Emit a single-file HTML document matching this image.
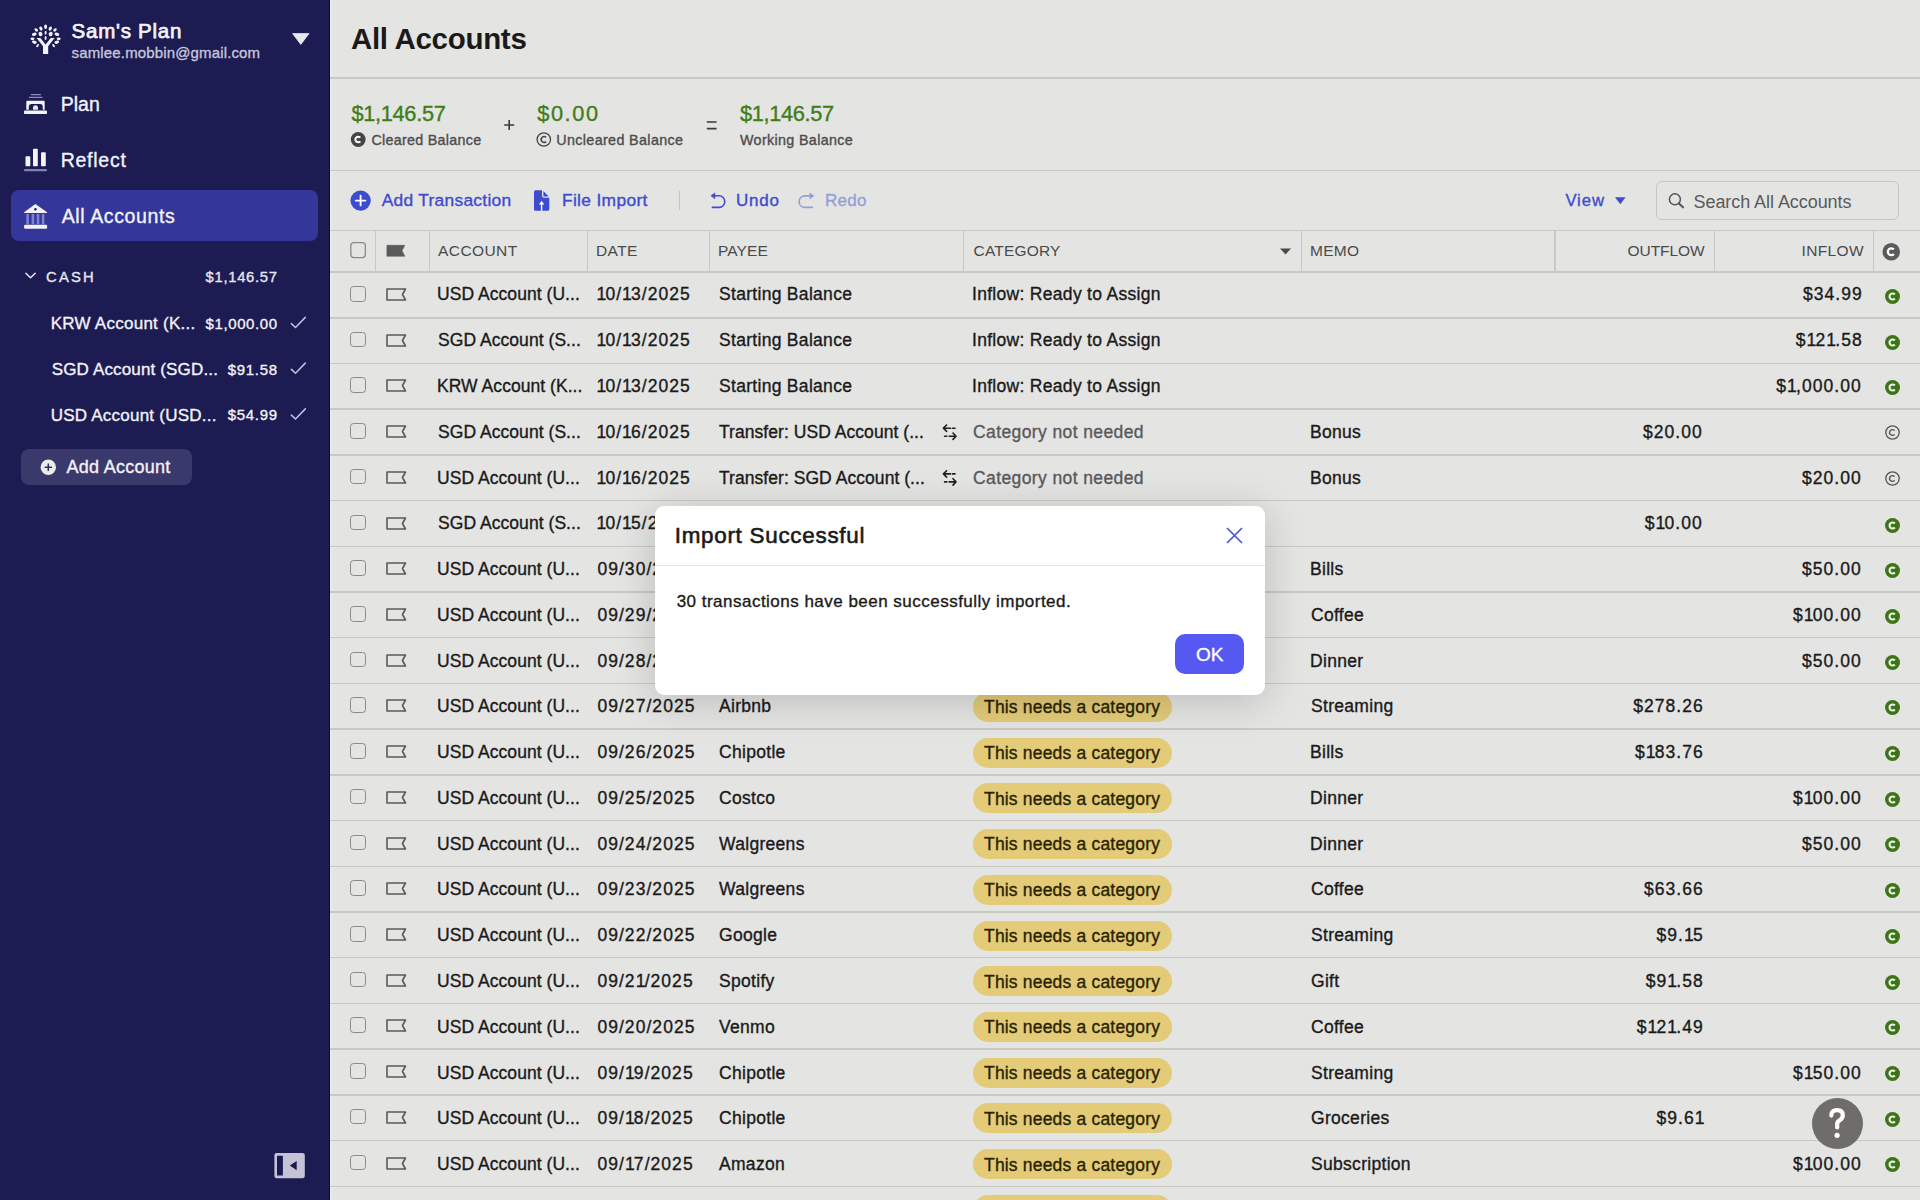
<!DOCTYPE html>
<html><head><meta charset="utf-8"><style>
html,body{margin:0;padding:0;width:1920px;height:1200px;overflow:hidden;background:#e4e4e3;}
body{position:relative;font-family:"Liberation Sans",sans-serif;}
div,svg{position:absolute;}
.t{-webkit-text-stroke:0.35px currentColor;}
</style></head><body>
<div style="position:absolute;left:0px;top:0px;width:330px;height:1200px;background:#1c1b52;border-radius:0px;"></div><div style="position:absolute;left:329px;top:0px;width:1px;height:1200px;background:#0c0b3e;border-radius:0px;"></div><div style="position:absolute;left:10.7px;top:190.2px;width:307.3px;height:51.0px;background:#35369a;border-radius:8px;"></div><div style="position:absolute;left:20.7px;top:448.9px;width:171.3px;height:35.900000000000034px;background:#3a396c;border-radius:8px;"></div><div style="position:absolute;left:330px;top:0px;width:1590px;height:1200px;background:#e4e4e3;border-radius:0px;"></div><div style="position:absolute;left:330px;top:0px;width:1.5px;height:1200px;background:#e9e9ee;border-radius:0px;"></div><div style="position:absolute;left:330px;top:77px;width:1590px;height:1.5px;background:#c9c9c4;border-radius:0px;"></div><div style="position:absolute;left:330px;top:169.5px;width:1590px;height:1.5px;background:#c9c9c4;border-radius:0px;"></div><div style="position:absolute;left:679px;top:190.6px;width:1px;height:19.400000000000006px;background:#c4c4c4;border-radius:0px;"></div><div style="position:absolute;left:1656.4px;top:180.8px;width:242.6px;height:39.5px;box-sizing:border-box;border:1.3px solid #c6c6c1;border-radius:6px;"></div><div style="position:absolute;left:330px;top:229.5px;width:1590px;height:1.5px;background:#c9c9c4;border-radius:0px;"></div><div style="position:absolute;left:330px;top:271px;width:1590px;height:1.5px;background:#c9c9c4;border-radius:0px;"></div><div style="position:absolute;left:374.79999999999995px;top:231px;width:1.2000000000000455px;height:40px;background:#c9c9c4;border-radius:0px;"></div><div style="position:absolute;left:428.5px;top:231px;width:1.2000000000000455px;height:40px;background:#c9c9c4;border-radius:0px;"></div><div style="position:absolute;left:587.1px;top:231px;width:1.2000000000000455px;height:40px;background:#c9c9c4;border-radius:0px;"></div><div style="position:absolute;left:708.6999999999999px;top:231px;width:1.2000000000000455px;height:40px;background:#c9c9c4;border-radius:0px;"></div><div style="position:absolute;left:963.1999999999999px;top:231px;width:1.2000000000000455px;height:40px;background:#c9c9c4;border-radius:0px;"></div><div style="position:absolute;left:1300.9px;top:231px;width:1.199999999999818px;height:40px;background:#c9c9c4;border-radius:0px;"></div><div style="position:absolute;left:1554.4px;top:231px;width:1.199999999999818px;height:40px;background:#c9c9c4;border-radius:0px;"></div><div style="position:absolute;left:1713.9px;top:231px;width:1.199999999999818px;height:40px;background:#c9c9c4;border-radius:0px;"></div><div style="position:absolute;left:1872.9px;top:231px;width:1.199999999999818px;height:40px;background:#c9c9c4;border-radius:0px;"></div><div style="position:absolute;left:330px;top:317.01px;width:1590px;height:1.5px;background:#c9c9c4;border-radius:0px;"></div><div style="position:absolute;left:330px;top:362.71999999999997px;width:1590px;height:1.5px;background:#c9c9c4;border-radius:0px;"></div><div style="position:absolute;left:330px;top:408.43px;width:1590px;height:1.5px;background:#c9c9c4;border-radius:0px;"></div><div style="position:absolute;left:330px;top:454.14px;width:1590px;height:1.5px;background:#c9c9c4;border-radius:0px;"></div><div style="position:absolute;left:330px;top:499.85px;width:1590px;height:1.5px;background:#c9c9c4;border-radius:0px;"></div><div style="position:absolute;left:330px;top:545.56px;width:1590px;height:1.5px;background:#c9c9c4;border-radius:0px;"></div><div style="position:absolute;left:330px;top:591.27px;width:1590px;height:1.5px;background:#c9c9c4;border-radius:0px;"></div><div style="position:absolute;left:972.5px;top:554.91px;width:199.7px;height:30px;border-radius:15px;background:#e3cb78;"></div><div style="position:absolute;left:330px;top:636.98px;width:1590px;height:1.5px;background:#c9c9c4;border-radius:0px;"></div><div style="position:absolute;left:972.5px;top:600.62px;width:199.7px;height:30px;border-radius:15px;background:#e3cb78;"></div><div style="position:absolute;left:330px;top:682.69px;width:1590px;height:1.5px;background:#c9c9c4;border-radius:0px;"></div><div style="position:absolute;left:972.5px;top:646.34px;width:199.7px;height:30px;border-radius:15px;background:#e3cb78;"></div><div style="position:absolute;left:330px;top:728.4px;width:1590px;height:1.5px;background:#c9c9c4;border-radius:0px;"></div><div style="position:absolute;left:972.5px;top:692.04px;width:199.7px;height:30px;border-radius:15px;background:#e3cb78;"></div><div style="position:absolute;left:330px;top:774.11px;width:1590px;height:1.5px;background:#c9c9c4;border-radius:0px;"></div><div style="position:absolute;left:972.5px;top:737.75px;width:199.7px;height:30px;border-radius:15px;background:#e3cb78;"></div><div style="position:absolute;left:330px;top:819.8199999999999px;width:1590px;height:1.5px;background:#c9c9c4;border-radius:0px;"></div><div style="position:absolute;left:972.5px;top:783.46px;width:199.7px;height:30px;border-radius:15px;background:#e3cb78;"></div><div style="position:absolute;left:330px;top:865.53px;width:1590px;height:1.5px;background:#c9c9c4;border-radius:0px;"></div><div style="position:absolute;left:972.5px;top:829.17px;width:199.7px;height:30px;border-radius:15px;background:#e3cb78;"></div><div style="position:absolute;left:330px;top:911.24px;width:1590px;height:1.5px;background:#c9c9c4;border-radius:0px;"></div><div style="position:absolute;left:972.5px;top:874.88px;width:199.7px;height:30px;border-radius:15px;background:#e3cb78;"></div><div style="position:absolute;left:330px;top:956.95px;width:1590px;height:1.5px;background:#c9c9c4;border-radius:0px;"></div><div style="position:absolute;left:972.5px;top:920.60px;width:199.7px;height:30px;border-radius:15px;background:#e3cb78;"></div><div style="position:absolute;left:330px;top:1002.66px;width:1590px;height:1.5px;background:#c9c9c4;border-radius:0px;"></div><div style="position:absolute;left:972.5px;top:966.30px;width:199.7px;height:30px;border-radius:15px;background:#e3cb78;"></div><div style="position:absolute;left:330px;top:1048.37px;width:1590px;height:1.5px;background:#c9c9c4;border-radius:0px;"></div><div style="position:absolute;left:972.5px;top:1012.01px;width:199.7px;height:30px;border-radius:15px;background:#e3cb78;"></div><div style="position:absolute;left:330px;top:1094.0800000000002px;width:1590px;height:1.5px;background:#c9c9c4;border-radius:0px;"></div><div style="position:absolute;left:972.5px;top:1057.73px;width:199.7px;height:30px;border-radius:15px;background:#e3cb78;"></div><div style="position:absolute;left:330px;top:1139.79px;width:1590px;height:1.5px;background:#c9c9c4;border-radius:0px;"></div><div style="position:absolute;left:972.5px;top:1103.43px;width:199.7px;height:30px;border-radius:15px;background:#e3cb78;"></div><div style="position:absolute;left:330px;top:1185.5px;width:1590px;height:1.5px;background:#c9c9c4;border-radius:0px;"></div><div style="position:absolute;left:972.5px;top:1149.14px;width:199.7px;height:30px;border-radius:15px;background:#e3cb78;"></div><div style="position:absolute;left:330px;top:1231.21px;width:1590px;height:1.5px;background:#c9c9c4;border-radius:0px;"></div><div style="position:absolute;left:972.5px;top:1194.86px;width:199.7px;height:30px;border-radius:15px;background:#e3cb78;"></div><div style="position:absolute;left:350.2px;top:286.06px;width:15.6px;height:15.6px;box-sizing:border-box;border:1.3px solid #8a8a8a;border-radius:3.5px;"></div><svg style="position:absolute;left:386px;top:288.06px" width="21" height="13" viewBox="0 0 21 13"><path d="M1 1 H19.5 L16.5 6.5 L19.5 12 H1 Z" fill="none" stroke="#5a5a5a" stroke-width="1.6" stroke-linejoin="round"/></svg><svg style="position:absolute;left:1885.2px;top:288.96px" width="15" height="15" viewBox="0 0 15 15"><circle cx="7.5" cy="7.5" r="7.5" fill="#3d7418"/><path d="M9.8 5.5 A3.0 3.0 0 1 0 9.8 9.5" fill="none" stroke="#eef4e6" stroke-width="2.1"/></svg><div style="position:absolute;left:350.2px;top:331.76px;width:15.6px;height:15.6px;box-sizing:border-box;border:1.3px solid #8a8a8a;border-radius:3.5px;"></div><svg style="position:absolute;left:386px;top:333.76px" width="21" height="13" viewBox="0 0 21 13"><path d="M1 1 H19.5 L16.5 6.5 L19.5 12 H1 Z" fill="none" stroke="#5a5a5a" stroke-width="1.6" stroke-linejoin="round"/></svg><svg style="position:absolute;left:1885.2px;top:334.67px" width="15" height="15" viewBox="0 0 15 15"><circle cx="7.5" cy="7.5" r="7.5" fill="#3d7418"/><path d="M9.8 5.5 A3.0 3.0 0 1 0 9.8 9.5" fill="none" stroke="#eef4e6" stroke-width="2.1"/></svg><div style="position:absolute;left:350.2px;top:377.48px;width:15.6px;height:15.6px;box-sizing:border-box;border:1.3px solid #8a8a8a;border-radius:3.5px;"></div><svg style="position:absolute;left:386px;top:379.48px" width="21" height="13" viewBox="0 0 21 13"><path d="M1 1 H19.5 L16.5 6.5 L19.5 12 H1 Z" fill="none" stroke="#5a5a5a" stroke-width="1.6" stroke-linejoin="round"/></svg><svg style="position:absolute;left:1885.2px;top:380.38px" width="15" height="15" viewBox="0 0 15 15"><circle cx="7.5" cy="7.5" r="7.5" fill="#3d7418"/><path d="M9.8 5.5 A3.0 3.0 0 1 0 9.8 9.5" fill="none" stroke="#eef4e6" stroke-width="2.1"/></svg><div style="position:absolute;left:350.2px;top:423.19px;width:15.6px;height:15.6px;box-sizing:border-box;border:1.3px solid #8a8a8a;border-radius:3.5px;"></div><svg style="position:absolute;left:386px;top:425.19px" width="21" height="13" viewBox="0 0 21 13"><path d="M1 1 H19.5 L16.5 6.5 L19.5 12 H1 Z" fill="none" stroke="#5a5a5a" stroke-width="1.6" stroke-linejoin="round"/></svg><svg style="position:absolute;left:0;top:0" width="1920" height="1200" viewBox="0 0 1920 1200"><path d="M946.6 424.99 L943.4 428.19 L946.6 431.38 M943.6 428.19 H950.6 M952.6 428.19 H955 M953 432.99 L956 436.19 L953 439.38 M955.8 436.19 H949.2 M946.8 436.19 H944.6" fill="none" stroke="#1f1f1f" stroke-width="1.6" stroke-linecap="round" stroke-linejoin="round"/></svg><svg style="position:absolute;left:1885.2px;top:425.49px" width="15" height="15" viewBox="0 0 15 15"><circle cx="7.5" cy="7.5" r="6.7" fill="none" stroke="#555" stroke-width="1.3"/><path d="M9.6 5.6 A2.9 2.9 0 1 0 9.6 9.4" fill="none" stroke="#555" stroke-width="1.4"/></svg><div style="position:absolute;left:350.2px;top:468.90px;width:15.6px;height:15.6px;box-sizing:border-box;border:1.3px solid #8a8a8a;border-radius:3.5px;"></div><svg style="position:absolute;left:386px;top:470.90px" width="21" height="13" viewBox="0 0 21 13"><path d="M1 1 H19.5 L16.5 6.5 L19.5 12 H1 Z" fill="none" stroke="#5a5a5a" stroke-width="1.6" stroke-linejoin="round"/></svg><svg style="position:absolute;left:0;top:0" width="1920" height="1200" viewBox="0 0 1920 1200"><path d="M946.6 470.70 L943.4 473.90 L946.6 477.10 M943.6 473.90 H950.6 M952.6 473.90 H955 M953 478.70 L956 481.90 L953 485.10 M955.8 481.90 H949.2 M946.8 481.90 H944.6" fill="none" stroke="#1f1f1f" stroke-width="1.6" stroke-linecap="round" stroke-linejoin="round"/></svg><svg style="position:absolute;left:1885.2px;top:471.20px" width="15" height="15" viewBox="0 0 15 15"><circle cx="7.5" cy="7.5" r="6.7" fill="none" stroke="#555" stroke-width="1.3"/><path d="M9.6 5.6 A2.9 2.9 0 1 0 9.6 9.4" fill="none" stroke="#555" stroke-width="1.4"/></svg><div style="position:absolute;left:350.2px;top:514.61px;width:15.6px;height:15.6px;box-sizing:border-box;border:1.3px solid #8a8a8a;border-radius:3.5px;"></div><svg style="position:absolute;left:386px;top:516.61px" width="21" height="13" viewBox="0 0 21 13"><path d="M1 1 H19.5 L16.5 6.5 L19.5 12 H1 Z" fill="none" stroke="#5a5a5a" stroke-width="1.6" stroke-linejoin="round"/></svg><svg style="position:absolute;left:1885.2px;top:517.50px" width="15" height="15" viewBox="0 0 15 15"><circle cx="7.5" cy="7.5" r="7.5" fill="#3d7418"/><path d="M9.8 5.5 A3.0 3.0 0 1 0 9.8 9.5" fill="none" stroke="#eef4e6" stroke-width="2.1"/></svg><div style="position:absolute;left:350.2px;top:560.32px;width:15.6px;height:15.6px;box-sizing:border-box;border:1.3px solid #8a8a8a;border-radius:3.5px;"></div><svg style="position:absolute;left:386px;top:562.32px" width="21" height="13" viewBox="0 0 21 13"><path d="M1 1 H19.5 L16.5 6.5 L19.5 12 H1 Z" fill="none" stroke="#5a5a5a" stroke-width="1.6" stroke-linejoin="round"/></svg><svg style="position:absolute;left:1885.2px;top:563.22px" width="15" height="15" viewBox="0 0 15 15"><circle cx="7.5" cy="7.5" r="7.5" fill="#3d7418"/><path d="M9.8 5.5 A3.0 3.0 0 1 0 9.8 9.5" fill="none" stroke="#eef4e6" stroke-width="2.1"/></svg><div style="position:absolute;left:350.2px;top:606.03px;width:15.6px;height:15.6px;box-sizing:border-box;border:1.3px solid #8a8a8a;border-radius:3.5px;"></div><svg style="position:absolute;left:386px;top:608.03px" width="21" height="13" viewBox="0 0 21 13"><path d="M1 1 H19.5 L16.5 6.5 L19.5 12 H1 Z" fill="none" stroke="#5a5a5a" stroke-width="1.6" stroke-linejoin="round"/></svg><svg style="position:absolute;left:1885.2px;top:608.93px" width="15" height="15" viewBox="0 0 15 15"><circle cx="7.5" cy="7.5" r="7.5" fill="#3d7418"/><path d="M9.8 5.5 A3.0 3.0 0 1 0 9.8 9.5" fill="none" stroke="#eef4e6" stroke-width="2.1"/></svg><div style="position:absolute;left:350.2px;top:651.74px;width:15.6px;height:15.6px;box-sizing:border-box;border:1.3px solid #8a8a8a;border-radius:3.5px;"></div><svg style="position:absolute;left:386px;top:653.74px" width="21" height="13" viewBox="0 0 21 13"><path d="M1 1 H19.5 L16.5 6.5 L19.5 12 H1 Z" fill="none" stroke="#5a5a5a" stroke-width="1.6" stroke-linejoin="round"/></svg><svg style="position:absolute;left:1885.2px;top:654.64px" width="15" height="15" viewBox="0 0 15 15"><circle cx="7.5" cy="7.5" r="7.5" fill="#3d7418"/><path d="M9.8 5.5 A3.0 3.0 0 1 0 9.8 9.5" fill="none" stroke="#eef4e6" stroke-width="2.1"/></svg><div style="position:absolute;left:350.2px;top:697.45px;width:15.6px;height:15.6px;box-sizing:border-box;border:1.3px solid #8a8a8a;border-radius:3.5px;"></div><svg style="position:absolute;left:386px;top:699.45px" width="21" height="13" viewBox="0 0 21 13"><path d="M1 1 H19.5 L16.5 6.5 L19.5 12 H1 Z" fill="none" stroke="#5a5a5a" stroke-width="1.6" stroke-linejoin="round"/></svg><svg style="position:absolute;left:1885.2px;top:700.35px" width="15" height="15" viewBox="0 0 15 15"><circle cx="7.5" cy="7.5" r="7.5" fill="#3d7418"/><path d="M9.8 5.5 A3.0 3.0 0 1 0 9.8 9.5" fill="none" stroke="#eef4e6" stroke-width="2.1"/></svg><div style="position:absolute;left:350.2px;top:743.16px;width:15.6px;height:15.6px;box-sizing:border-box;border:1.3px solid #8a8a8a;border-radius:3.5px;"></div><svg style="position:absolute;left:386px;top:745.16px" width="21" height="13" viewBox="0 0 21 13"><path d="M1 1 H19.5 L16.5 6.5 L19.5 12 H1 Z" fill="none" stroke="#5a5a5a" stroke-width="1.6" stroke-linejoin="round"/></svg><svg style="position:absolute;left:1885.2px;top:746.06px" width="15" height="15" viewBox="0 0 15 15"><circle cx="7.5" cy="7.5" r="7.5" fill="#3d7418"/><path d="M9.8 5.5 A3.0 3.0 0 1 0 9.8 9.5" fill="none" stroke="#eef4e6" stroke-width="2.1"/></svg><div style="position:absolute;left:350.2px;top:788.87px;width:15.6px;height:15.6px;box-sizing:border-box;border:1.3px solid #8a8a8a;border-radius:3.5px;"></div><svg style="position:absolute;left:386px;top:790.87px" width="21" height="13" viewBox="0 0 21 13"><path d="M1 1 H19.5 L16.5 6.5 L19.5 12 H1 Z" fill="none" stroke="#5a5a5a" stroke-width="1.6" stroke-linejoin="round"/></svg><svg style="position:absolute;left:1885.2px;top:791.76px" width="15" height="15" viewBox="0 0 15 15"><circle cx="7.5" cy="7.5" r="7.5" fill="#3d7418"/><path d="M9.8 5.5 A3.0 3.0 0 1 0 9.8 9.5" fill="none" stroke="#eef4e6" stroke-width="2.1"/></svg><div style="position:absolute;left:350.2px;top:834.58px;width:15.6px;height:15.6px;box-sizing:border-box;border:1.3px solid #8a8a8a;border-radius:3.5px;"></div><svg style="position:absolute;left:386px;top:836.58px" width="21" height="13" viewBox="0 0 21 13"><path d="M1 1 H19.5 L16.5 6.5 L19.5 12 H1 Z" fill="none" stroke="#5a5a5a" stroke-width="1.6" stroke-linejoin="round"/></svg><svg style="position:absolute;left:1885.2px;top:837.48px" width="15" height="15" viewBox="0 0 15 15"><circle cx="7.5" cy="7.5" r="7.5" fill="#3d7418"/><path d="M9.8 5.5 A3.0 3.0 0 1 0 9.8 9.5" fill="none" stroke="#eef4e6" stroke-width="2.1"/></svg><div style="position:absolute;left:350.2px;top:880.29px;width:15.6px;height:15.6px;box-sizing:border-box;border:1.3px solid #8a8a8a;border-radius:3.5px;"></div><svg style="position:absolute;left:386px;top:882.29px" width="21" height="13" viewBox="0 0 21 13"><path d="M1 1 H19.5 L16.5 6.5 L19.5 12 H1 Z" fill="none" stroke="#5a5a5a" stroke-width="1.6" stroke-linejoin="round"/></svg><svg style="position:absolute;left:1885.2px;top:883.19px" width="15" height="15" viewBox="0 0 15 15"><circle cx="7.5" cy="7.5" r="7.5" fill="#3d7418"/><path d="M9.8 5.5 A3.0 3.0 0 1 0 9.8 9.5" fill="none" stroke="#eef4e6" stroke-width="2.1"/></svg><div style="position:absolute;left:350.2px;top:926.00px;width:15.6px;height:15.6px;box-sizing:border-box;border:1.3px solid #8a8a8a;border-radius:3.5px;"></div><svg style="position:absolute;left:386px;top:928.00px" width="21" height="13" viewBox="0 0 21 13"><path d="M1 1 H19.5 L16.5 6.5 L19.5 12 H1 Z" fill="none" stroke="#5a5a5a" stroke-width="1.6" stroke-linejoin="round"/></svg><svg style="position:absolute;left:1885.2px;top:928.90px" width="15" height="15" viewBox="0 0 15 15"><circle cx="7.5" cy="7.5" r="7.5" fill="#3d7418"/><path d="M9.8 5.5 A3.0 3.0 0 1 0 9.8 9.5" fill="none" stroke="#eef4e6" stroke-width="2.1"/></svg><div style="position:absolute;left:350.2px;top:971.71px;width:15.6px;height:15.6px;box-sizing:border-box;border:1.3px solid #8a8a8a;border-radius:3.5px;"></div><svg style="position:absolute;left:386px;top:973.71px" width="21" height="13" viewBox="0 0 21 13"><path d="M1 1 H19.5 L16.5 6.5 L19.5 12 H1 Z" fill="none" stroke="#5a5a5a" stroke-width="1.6" stroke-linejoin="round"/></svg><svg style="position:absolute;left:1885.2px;top:974.61px" width="15" height="15" viewBox="0 0 15 15"><circle cx="7.5" cy="7.5" r="7.5" fill="#3d7418"/><path d="M9.8 5.5 A3.0 3.0 0 1 0 9.8 9.5" fill="none" stroke="#eef4e6" stroke-width="2.1"/></svg><div style="position:absolute;left:350.2px;top:1017.41px;width:15.6px;height:15.6px;box-sizing:border-box;border:1.3px solid #8a8a8a;border-radius:3.5px;"></div><svg style="position:absolute;left:386px;top:1019.41px" width="21" height="13" viewBox="0 0 21 13"><path d="M1 1 H19.5 L16.5 6.5 L19.5 12 H1 Z" fill="none" stroke="#5a5a5a" stroke-width="1.6" stroke-linejoin="round"/></svg><svg style="position:absolute;left:1885.2px;top:1020.31px" width="15" height="15" viewBox="0 0 15 15"><circle cx="7.5" cy="7.5" r="7.5" fill="#3d7418"/><path d="M9.8 5.5 A3.0 3.0 0 1 0 9.8 9.5" fill="none" stroke="#eef4e6" stroke-width="2.1"/></svg><div style="position:absolute;left:350.2px;top:1063.13px;width:15.6px;height:15.6px;box-sizing:border-box;border:1.3px solid #8a8a8a;border-radius:3.5px;"></div><svg style="position:absolute;left:386px;top:1065.13px" width="21" height="13" viewBox="0 0 21 13"><path d="M1 1 H19.5 L16.5 6.5 L19.5 12 H1 Z" fill="none" stroke="#5a5a5a" stroke-width="1.6" stroke-linejoin="round"/></svg><svg style="position:absolute;left:1885.2px;top:1066.03px" width="15" height="15" viewBox="0 0 15 15"><circle cx="7.5" cy="7.5" r="7.5" fill="#3d7418"/><path d="M9.8 5.5 A3.0 3.0 0 1 0 9.8 9.5" fill="none" stroke="#eef4e6" stroke-width="2.1"/></svg><div style="position:absolute;left:350.2px;top:1108.84px;width:15.6px;height:15.6px;box-sizing:border-box;border:1.3px solid #8a8a8a;border-radius:3.5px;"></div><svg style="position:absolute;left:386px;top:1110.84px" width="21" height="13" viewBox="0 0 21 13"><path d="M1 1 H19.5 L16.5 6.5 L19.5 12 H1 Z" fill="none" stroke="#5a5a5a" stroke-width="1.6" stroke-linejoin="round"/></svg><svg style="position:absolute;left:1885.2px;top:1111.73px" width="15" height="15" viewBox="0 0 15 15"><circle cx="7.5" cy="7.5" r="7.5" fill="#3d7418"/><path d="M9.8 5.5 A3.0 3.0 0 1 0 9.8 9.5" fill="none" stroke="#eef4e6" stroke-width="2.1"/></svg><div style="position:absolute;left:350.2px;top:1154.55px;width:15.6px;height:15.6px;box-sizing:border-box;border:1.3px solid #8a8a8a;border-radius:3.5px;"></div><svg style="position:absolute;left:386px;top:1156.55px" width="21" height="13" viewBox="0 0 21 13"><path d="M1 1 H19.5 L16.5 6.5 L19.5 12 H1 Z" fill="none" stroke="#5a5a5a" stroke-width="1.6" stroke-linejoin="round"/></svg><svg style="position:absolute;left:1885.2px;top:1157.44px" width="15" height="15" viewBox="0 0 15 15"><circle cx="7.5" cy="7.5" r="7.5" fill="#3d7418"/><path d="M9.8 5.5 A3.0 3.0 0 1 0 9.8 9.5" fill="none" stroke="#eef4e6" stroke-width="2.1"/></svg><div style="position:absolute;left:350.2px;top:1200.26px;width:15.6px;height:15.6px;box-sizing:border-box;border:1.3px solid #8a8a8a;border-radius:3.5px;"></div><svg style="position:absolute;left:386px;top:1202.26px" width="21" height="13" viewBox="0 0 21 13"><path d="M1 1 H19.5 L16.5 6.5 L19.5 12 H1 Z" fill="none" stroke="#5a5a5a" stroke-width="1.6" stroke-linejoin="round"/></svg><svg style="position:absolute;left:1885.2px;top:1203.15px" width="15" height="15" viewBox="0 0 15 15"><circle cx="7.5" cy="7.5" r="7.5" fill="#3d7418"/><path d="M9.8 5.5 A3.0 3.0 0 1 0 9.8 9.5" fill="none" stroke="#eef4e6" stroke-width="2.1"/></svg>
<svg style="position:absolute;left:0;top:0" width="330" height="1200" viewBox="0 0 330 1200"><g fill="#f2f2f7"><ellipse cx="45.6" cy="26.8" rx="1.5" ry="2.3" transform="rotate(0 45.6 26.8)"/><ellipse cx="40.9" cy="28.6" rx="1.5" ry="2.2" transform="rotate(-30 40.9 28.6)"/><ellipse cx="50.3" cy="28.6" rx="1.5" ry="2.2" transform="rotate(30 50.3 28.6)"/><ellipse cx="36.2" cy="29.9" rx="1.4" ry="2.0" transform="rotate(-50 36.2 29.9)"/><ellipse cx="55.0" cy="29.9" rx="1.4" ry="2.0" transform="rotate(50 55.0 29.9)"/><ellipse cx="45.6" cy="32.8" rx="1.0" ry="2.0" transform="rotate(0 45.6 32.8)"/><ellipse cx="40.5" cy="34.0" rx="1.9" ry="2.3" transform="rotate(-20 40.5 34.0)"/><ellipse cx="50.7" cy="34.0" rx="1.9" ry="2.3" transform="rotate(20 50.7 34.0)"/><ellipse cx="34.3" cy="34.3" rx="2.4" ry="1.6" transform="rotate(-15 34.3 34.3)"/><ellipse cx="56.9" cy="34.3" rx="2.4" ry="1.6" transform="rotate(15 56.9 34.3)"/><ellipse cx="45.6" cy="37.9" rx="1.0" ry="2.0" transform="rotate(0 45.6 37.9)"/><ellipse cx="32.5" cy="38.8" rx="2.0" ry="1.4" transform="rotate(0 32.5 38.8)"/><ellipse cx="58.7" cy="38.8" rx="2.0" ry="1.4" transform="rotate(0 58.7 38.8)"/><ellipse cx="34.4" cy="42.2" rx="2.4" ry="1.6" transform="rotate(15 34.4 42.2)"/><ellipse cx="56.8" cy="42.2" rx="2.4" ry="1.6" transform="rotate(-15 56.8 42.2)"/><ellipse cx="37.6" cy="45.6" rx="1.0" ry="1.9" transform="rotate(35 37.6 45.6)"/><ellipse cx="53.6" cy="45.6" rx="1.0" ry="1.9" transform="rotate(-35 53.6 45.6)"/><path d="M36.6 38 L40.4 38 L45.6 44.6 L50.8 38 L54.6 38 L48.2 46.2 L48.2 54 L43.0 54 L43.0 46.2 Z"/></g><g>
<rect x="30.8" y="94" width="10.2" height="1.3" rx="0.6" fill="#8c8cc4"/>
<rect x="28.8" y="96.7" width="13.8" height="1.3" rx="0.6" fill="#8c8cc4"/>
<path d="M26.3 101.8 Q26.3 100.7 27.4 100.7 L43.6 100.7 Q44.7 100.7 44.7 101.8 L44.7 109.8 L42.7 109.8 L42.7 106.5 Q42.7 104 40.2 104 L31.2 104 Q28.8 104 28.8 106.5 L28.8 109.8 L26.3 109.8 Z" fill="#f2f2f7"/>
<path d="M33.0 109.8 L33.0 107.8 Q33.0 105.3 35.5 105.3 Q38.0 105.3 38.0 107.8 L38.0 109.8 Z" fill="#e8e8f8"/>
<rect x="24" y="110.5" width="23" height="3.6" rx="0.8" fill="#f2f2f7"/>
</g><g fill="#f2f2f7">
<rect x="25.5" y="156.3" width="4.8" height="10" rx="0.8"/>
<rect x="33" y="148.8" width="4.8" height="17.5" rx="0.8"/>
<rect x="41" y="152.3" width="4.8" height="14" rx="0.8"/>
<rect x="24" y="169" width="23" height="2.2" rx="1" fill="#7f80b8"/>
</g><g>
<path d="M35.4 204 L47.1 212.2 Q47.3 213 46.4 213 L24.6 213 Q23.7 213 24.1 212.2 Z" fill="#f2f2f7"/>
<circle cx="35.4" cy="209.2" r="1.3" fill="#1e1d6a"/>
<g fill="#7c82d4"><rect x="26.3" y="214" width="2.6" height="10.2"/><rect x="31.6" y="214" width="2.6" height="10.2"/><rect x="36.7" y="214" width="2.6" height="10.2"/><rect x="41.8" y="214" width="2.6" height="10.2"/></g>
<rect x="24.1" y="224.8" width="23" height="4" rx="1.2" fill="#f2f2f7"/>
</g>
<path d="M292.6 33.6 L309 33.6 L300.8 44.4 Z" fill="#e8e8f0" stroke="#e8e8f0" stroke-width="0.8" stroke-linejoin="round"/>
<path d="M25.9 273.2 L30.5 277.8 L35.2 273.2" fill="none" stroke="#e6e6f6" stroke-width="1.5" stroke-linecap="round" stroke-linejoin="round"/>
<path d="M291.4 323.6 L295.5 327.5 L305.3 317.4" fill="none" stroke="#bdbde0" stroke-width="1.6" stroke-linecap="round" stroke-linejoin="round"/><path d="M291.4 369.35 L295.5 373.25 L305.3 363.15" fill="none" stroke="#bdbde0" stroke-width="1.6" stroke-linecap="round" stroke-linejoin="round"/><path d="M291.4 415.1 L295.5 419.0 L305.3 408.9" fill="none" stroke="#bdbde0" stroke-width="1.6" stroke-linecap="round" stroke-linejoin="round"/>
<circle cx="48.3" cy="467.3" r="7.7" fill="#ecece8"/>
<path d="M44.6 467.3 H52 M48.3 463.6 V471" stroke="#2f2d5e" stroke-width="1.5"/>
<rect x="274.4" y="1153" width="30.4" height="25.3" rx="2.2" fill="#c3c3d5"/>
<rect x="277" y="1155.8" width="5.9" height="19.8" rx="0.6" fill="#1b1a50"/>
<path d="M289.8 1165.5 L296.7 1160.9 L296.7 1170.2 Z" fill="#1b1a50"/>
</svg>
<svg style="position:absolute;left:0;top:0" width="1920" height="1200" viewBox="0 0 1920 1200"><circle cx="358.2" cy="139.5" r="7.4" fill="#454545"/><path d="M360.34 137.70 A2.8 2.8 0 1 0 360.34 141.30" fill="none" stroke="#ffffff" stroke-width="2.0"/><circle cx="543.8" cy="139.5" r="6.7" fill="none" stroke="#454545" stroke-width="1.3"/><path d="M546.1 137.4 A2.9 2.9 0 1 0 546.1 141.6" fill="none" stroke="#454545" stroke-width="1.5"/><path d="M504.2 125 H514.2 M509.2 120 V130" stroke="#3a3a3a" stroke-width="1.6"/><path d="M706.8 122 H716.6 M706.8 128.6 H716.6" stroke="#3a3a3a" stroke-width="1.6"/><circle cx="360.6" cy="200.6" r="10.2" fill="#3d4bd1"/><path d="M355.8 200.6 H365.4 M360.6 195.8 V205.4" stroke="#fff" stroke-width="1.9" stroke-linecap="round"/><path d="M535.5 190.3 L542 190.3 L542 196 Q542 197.8 543.8 197.8 L549.3 197.8 L549.3 209.2 Q549.3 210.8 547.7 210.8 L535.5 210.8 Q534 210.8 534 209.2 L534 191.9 Q534 190.3 535.5 190.3 Z" fill="#3d4bd1"/><path d="M543.4 191 L548.7 196.4 L543.4 196.4 Z" fill="#3d4bd1"/><path d="M541.6 210.8 V203.5" stroke="#fff" stroke-width="1.4"/><path d="M538.9 204.4 L541.6 200.8 L544.3 204.4 Z" fill="#fff"/><path d="M714.6 195.8 H719 A5.8 5.8 0 0 1 719 207.4 H712.4" fill="none" stroke="#3d4bd1" stroke-width="1.6" stroke-linecap="round"/><path d="M710.9 195.8 L714.9 192.9 L714.9 198.7 Z" fill="#3d4bd1" stroke="#3d4bd1" stroke-width="0.6" stroke-linejoin="round"/><path d="M810.2 195.9 H804.2 A5.8 5.8 0 0 0 804.2 207.4 H812.4" fill="none" stroke="#93a0d6" stroke-width="1.6" stroke-linecap="round"/><path d="M813.9 195.9 L809.9 193 L809.9 198.8 Z" fill="#93a0d6" stroke="#93a0d6" stroke-width="0.6" stroke-linejoin="round"/><path d="M1615 197.3 L1625.6 197.3 L1620.3 204.3 Z" fill="#3d4bd1"/><circle cx="1674.9" cy="199.3" r="5.5" fill="none" stroke="#555" stroke-width="1.5"/><path d="M1678.9 203.5 L1683 207.3" stroke="#555" stroke-width="2.1" stroke-linecap="round"/><rect x="350.85" y="242.6" width="14.5" height="15" rx="3" fill="none" stroke="#8a8a8a" stroke-width="1.3"/><path d="M386.9 245.3 H404.8 L402 250.7 L404.8 256.2 H386.9 Z" fill="#5a5a5a" stroke="#5a5a5a" stroke-width="0.6" stroke-linejoin="round"/><path d="M1280 248.6 L1291 248.6 L1285.5 254.6 Z" fill="#4a4a4a"/><circle cx="1891.25" cy="251.75" r="8.75" fill="#5a5a5a"/><path d="M1893.85 249.56 A3.4 3.4 0 1 0 1893.85 253.94" fill="none" stroke="#ffffff" stroke-width="2.3"/></svg>
<div class="t" style="position:absolute;top:20.97px;font-size:20.5px;line-height:20.5px;color:#f2f2f7;font-weight:400;white-space:pre;letter-spacing:0.751px;left:71.60px;-webkit-text-stroke:0.75px #f2f2f7;">Sam&#x27;s Plan</div><div class="t" style="position:absolute;top:45.15px;font-size:15px;line-height:15px;color:#c5c5da;font-weight:400;white-space:pre;letter-spacing:0.145px;left:71.60px;">samlee.mobbin@gmail.com</div><div class="t" style="position:absolute;top:95.02px;font-size:19.5px;line-height:19.5px;color:#f2f2f7;font-weight:400;white-space:pre;letter-spacing:0.039px;left:60.70px;">Plan</div><div class="t" style="position:absolute;top:150.83px;font-size:19.5px;line-height:19.5px;color:#f2f2f7;font-weight:400;white-space:pre;letter-spacing:0.738px;left:60.70px;">Reflect</div><div class="t" style="position:absolute;top:206.93px;font-size:19.5px;line-height:19.5px;color:#f2f2f7;font-weight:400;white-space:pre;letter-spacing:0.614px;left:61.70px;">All Accounts</div><div class="t" style="position:absolute;top:270.32px;font-size:14.8px;line-height:14.8px;color:#e6e6ee;font-weight:400;white-space:pre;letter-spacing:2.192px;left:46.00px;">CASH</div><div class="t" style="position:absolute;top:270.42px;font-size:14.8px;line-height:14.8px;color:#e6e6ee;font-weight:400;white-space:pre;letter-spacing:0.688px;right:1642.38px;">$1,146.57</div><div class="t" style="position:absolute;top:315.30px;font-size:17px;line-height:17px;color:#f2f2f7;font-weight:400;white-space:pre;letter-spacing:0.258px;left:50.70px;">KRW Account (K...</div><div class="t" style="position:absolute;top:316.00px;font-size:15px;line-height:15px;color:#f2f2f7;font-weight:400;white-space:pre;letter-spacing:0.589px;right:1642.37px;">$1,000.00</div><div class="t" style="position:absolute;top:361.05px;font-size:17px;line-height:17px;color:#f2f2f7;font-weight:400;white-space:pre;letter-spacing:0.152px;left:51.70px;">SGD Account (SGD...</div><div class="t" style="position:absolute;top:361.75px;font-size:15px;line-height:15px;color:#f2f2f7;font-weight:400;white-space:pre;letter-spacing:0.673px;right:1642.29px;">$91.58</div><div class="t" style="position:absolute;top:406.75px;font-size:17px;line-height:17px;color:#f2f2f7;font-weight:400;white-space:pre;letter-spacing:0.230px;left:50.70px;">USD Account (USD...</div><div class="t" style="position:absolute;top:407.45px;font-size:15px;line-height:15px;color:#f2f2f7;font-weight:400;white-space:pre;letter-spacing:0.673px;right:1642.29px;">$54.99</div><div class="t" style="position:absolute;top:458.30px;font-size:18px;line-height:18px;color:#f2f2f7;font-weight:400;white-space:pre;letter-spacing:0.253px;left:66.60px;">Add Account</div><div style="position:absolute;top:23.93px;font-size:29.5px;line-height:29.5px;color:#1a1a1a;font-weight:700;white-space:pre;letter-spacing:-0.299px;left:350.90px;">All Accounts</div><div class="t" style="position:absolute;top:103.07px;font-size:21.8px;line-height:21.8px;color:#3f7d18;font-weight:400;white-space:pre;letter-spacing:-0.318px;left:351.40px;">$1,146.57</div><div class="t" style="position:absolute;top:132.75px;font-size:14.3px;line-height:14.3px;color:#4d4d4d;font-weight:400;white-space:pre;letter-spacing:0.289px;left:371.40px;">Cleared Balance</div><div class="t" style="position:absolute;top:103.07px;font-size:21.8px;line-height:21.8px;color:#3f7d18;font-weight:400;white-space:pre;letter-spacing:1.594px;left:537.20px;">$0.00</div><div class="t" style="position:absolute;top:132.75px;font-size:14.3px;line-height:14.3px;color:#4d4d4d;font-weight:400;white-space:pre;letter-spacing:0.378px;left:556.20px;">Uncleared Balance</div><div class="t" style="position:absolute;top:103.07px;font-size:21.8px;line-height:21.8px;color:#3f7d18;font-weight:400;white-space:pre;letter-spacing:-0.356px;left:740.00px;">$1,146.57</div><div class="t" style="position:absolute;top:132.75px;font-size:14.3px;line-height:14.3px;color:#4d4d4d;font-weight:400;white-space:pre;letter-spacing:0.353px;left:740.00px;">Working Balance</div><div class="t" style="position:absolute;top:192.41px;font-size:17.4px;line-height:17.4px;color:#3d4bd1;font-weight:400;white-space:pre;letter-spacing:0.270px;left:381.70px;">Add Transaction</div><div class="t" style="position:absolute;top:192.41px;font-size:17.4px;line-height:17.4px;color:#3d4bd1;font-weight:400;white-space:pre;letter-spacing:0.319px;left:562.00px;">File Import</div><div class="t" style="position:absolute;top:192.05px;font-size:17px;line-height:17px;color:#3d4bd1;font-weight:400;white-space:pre;letter-spacing:0.805px;left:735.90px;">Undo</div><div class="t" style="position:absolute;top:192.05px;font-size:17px;line-height:17px;color:#93a0d6;font-weight:400;white-space:pre;letter-spacing:0.271px;left:825.00px;">Redo</div><div class="t" style="position:absolute;top:192.61px;font-size:16.7px;line-height:16.7px;color:#3d4bd1;font-weight:400;white-space:pre;letter-spacing:0.894px;left:1565.40px;">View</div><div style="position:absolute;top:192.50px;font-size:18px;line-height:18px;color:#5a5a5a;font-weight:400;white-space:pre;letter-spacing:-0.060px;left:1693.50px;">Search All Accounts</div><div style="position:absolute;top:243.22px;font-size:15.5px;line-height:15.5px;color:#4a4a4a;font-weight:400;white-space:pre;letter-spacing:0.405px;left:438.10px;">ACCOUNT</div><div style="position:absolute;top:243.22px;font-size:15.5px;line-height:15.5px;color:#4a4a4a;font-weight:400;white-space:pre;letter-spacing:0.383px;left:596.00px;">DATE</div><div style="position:absolute;top:243.22px;font-size:15.5px;line-height:15.5px;color:#4a4a4a;font-weight:400;white-space:pre;letter-spacing:0.162px;left:717.90px;">PAYEE</div><div style="position:absolute;top:243.22px;font-size:15.5px;line-height:15.5px;color:#4a4a4a;font-weight:400;white-space:pre;letter-spacing:0.184px;left:973.50px;">CATEGORY</div><div style="position:absolute;top:243.22px;font-size:15.5px;line-height:15.5px;color:#4a4a4a;font-weight:400;white-space:pre;letter-spacing:0.279px;left:1310.00px;">MEMO</div><div style="position:absolute;top:243.22px;font-size:15.5px;line-height:15.5px;color:#4a4a4a;font-weight:400;white-space:pre;letter-spacing:-0.060px;right:215.43px;">OUTFLOW</div><div style="position:absolute;top:243.22px;font-size:15.5px;line-height:15.5px;color:#4a4a4a;font-weight:400;white-space:pre;letter-spacing:0.371px;right:56.00px;">INFLOW</div><div class="t" style="position:absolute;top:286.43px;font-size:17.5px;line-height:17.5px;color:#1a1a1a;font-weight:400;white-space:pre;letter-spacing:0.050px;left:437.00px;">USD Account (U...</div><div class="t" style="position:absolute;top:286.43px;font-size:17.5px;line-height:17.5px;color:#1a1a1a;font-weight:400;white-space:pre;letter-spacing:1.050px;left:596.40px;"><span style="letter-spacing:-0.75px">1</span>0/<span style="letter-spacing:-0.75px">1</span>3/2025</div><div class="t" style="position:absolute;top:286.43px;font-size:17.5px;line-height:17.5px;color:#1a1a1a;font-weight:400;white-space:pre;letter-spacing:0.300px;left:719.00px;">Starting Balance</div><div class="t" style="position:absolute;top:286.43px;font-size:17.5px;line-height:17.5px;color:#1a1a1a;font-weight:400;white-space:pre;letter-spacing:0.300px;left:972.00px;">Inflow: Ready to Assign</div><div class="t" style="position:absolute;top:286.43px;font-size:17.5px;line-height:17.5px;color:#1a1a1a;font-weight:400;white-space:pre;letter-spacing:1.050px;right:57.22px;">$34.99</div><div class="t" style="position:absolute;top:332.19px;font-size:17.5px;line-height:17.5px;color:#1a1a1a;font-weight:400;white-space:pre;letter-spacing:0.050px;left:438.00px;">SGD Account (S...</div><div class="t" style="position:absolute;top:332.19px;font-size:17.5px;line-height:17.5px;color:#1a1a1a;font-weight:400;white-space:pre;letter-spacing:1.050px;left:596.40px;"><span style="letter-spacing:-0.75px">1</span>0/<span style="letter-spacing:-0.75px">1</span>3/2025</div><div class="t" style="position:absolute;top:332.19px;font-size:17.5px;line-height:17.5px;color:#1a1a1a;font-weight:400;white-space:pre;letter-spacing:0.300px;left:719.00px;">Starting Balance</div><div class="t" style="position:absolute;top:332.19px;font-size:17.5px;line-height:17.5px;color:#1a1a1a;font-weight:400;white-space:pre;letter-spacing:0.300px;left:972.00px;">Inflow: Ready to Assign</div><div class="t" style="position:absolute;top:332.19px;font-size:17.5px;line-height:17.5px;color:#1a1a1a;font-weight:400;white-space:pre;letter-spacing:1.050px;right:57.22px;">$<span style="letter-spacing:-0.75px">1</span>2<span style="letter-spacing:-0.75px">1</span>.58</div><div class="t" style="position:absolute;top:377.97px;font-size:17.5px;line-height:17.5px;color:#1a1a1a;font-weight:400;white-space:pre;letter-spacing:0.050px;left:437.00px;">KRW Account (K...</div><div class="t" style="position:absolute;top:377.97px;font-size:17.5px;line-height:17.5px;color:#1a1a1a;font-weight:400;white-space:pre;letter-spacing:1.050px;left:596.40px;"><span style="letter-spacing:-0.75px">1</span>0/<span style="letter-spacing:-0.75px">1</span>3/2025</div><div class="t" style="position:absolute;top:377.97px;font-size:17.5px;line-height:17.5px;color:#1a1a1a;font-weight:400;white-space:pre;letter-spacing:0.300px;left:719.00px;">Starting Balance</div><div class="t" style="position:absolute;top:377.97px;font-size:17.5px;line-height:17.5px;color:#1a1a1a;font-weight:400;white-space:pre;letter-spacing:0.300px;left:972.00px;">Inflow: Ready to Assign</div><div class="t" style="position:absolute;top:377.97px;font-size:17.5px;line-height:17.5px;color:#1a1a1a;font-weight:400;white-space:pre;letter-spacing:1.050px;right:58.22px;">$<span style="letter-spacing:-0.75px">1</span>,000.00</div><div class="t" style="position:absolute;top:423.74px;font-size:17.5px;line-height:17.5px;color:#1a1a1a;font-weight:400;white-space:pre;letter-spacing:0.050px;left:438.00px;">SGD Account (S...</div><div class="t" style="position:absolute;top:423.74px;font-size:17.5px;line-height:17.5px;color:#1a1a1a;font-weight:400;white-space:pre;letter-spacing:1.050px;left:596.40px;"><span style="letter-spacing:-0.75px">1</span>0/<span style="letter-spacing:-0.75px">1</span>6/2025</div><div class="t" style="position:absolute;top:423.74px;font-size:17.5px;line-height:17.5px;color:#1a1a1a;font-weight:400;white-space:pre;letter-spacing:0.050px;left:719.00px;">Transfer: USD Account (...</div><div class="t" style="position:absolute;top:423.74px;font-size:17.5px;line-height:17.5px;color:#5a5a5a;font-weight:400;white-space:pre;letter-spacing:0.393px;left:973.00px;">Category not needed</div><div class="t" style="position:absolute;top:423.74px;font-size:17.5px;line-height:17.5px;color:#1a1a1a;font-weight:400;white-space:pre;letter-spacing:0.300px;left:1310.00px;">Bonus</div><div class="t" style="position:absolute;top:423.74px;font-size:17.5px;line-height:17.5px;color:#1a1a1a;font-weight:400;white-space:pre;letter-spacing:1.050px;right:217.22px;">$20.00</div><div class="t" style="position:absolute;top:469.51px;font-size:17.5px;line-height:17.5px;color:#1a1a1a;font-weight:400;white-space:pre;letter-spacing:0.050px;left:437.00px;">USD Account (U...</div><div class="t" style="position:absolute;top:469.51px;font-size:17.5px;line-height:17.5px;color:#1a1a1a;font-weight:400;white-space:pre;letter-spacing:1.050px;left:596.40px;"><span style="letter-spacing:-0.75px">1</span>0/<span style="letter-spacing:-0.75px">1</span>6/2025</div><div class="t" style="position:absolute;top:469.51px;font-size:17.5px;line-height:17.5px;color:#1a1a1a;font-weight:400;white-space:pre;letter-spacing:0.050px;left:719.00px;">Transfer: SGD Account (...</div><div class="t" style="position:absolute;top:469.51px;font-size:17.5px;line-height:17.5px;color:#5a5a5a;font-weight:400;white-space:pre;letter-spacing:0.393px;left:973.00px;">Category not needed</div><div class="t" style="position:absolute;top:469.51px;font-size:17.5px;line-height:17.5px;color:#1a1a1a;font-weight:400;white-space:pre;letter-spacing:0.300px;left:1310.00px;">Bonus</div><div class="t" style="position:absolute;top:469.51px;font-size:17.5px;line-height:17.5px;color:#1a1a1a;font-weight:400;white-space:pre;letter-spacing:1.050px;right:58.22px;">$20.00</div><div class="t" style="position:absolute;top:515.27px;font-size:17.5px;line-height:17.5px;color:#1a1a1a;font-weight:400;white-space:pre;letter-spacing:0.050px;left:438.00px;">SGD Account (S...</div><div class="t" style="position:absolute;top:515.27px;font-size:17.5px;line-height:17.5px;color:#1a1a1a;font-weight:400;white-space:pre;letter-spacing:1.050px;left:596.40px;"><span style="letter-spacing:-0.75px">1</span>0/<span style="letter-spacing:-0.75px">1</span>5/2025</div><div class="t" style="position:absolute;top:515.27px;font-size:17.5px;line-height:17.5px;color:#1a1a1a;font-weight:400;white-space:pre;letter-spacing:1.050px;right:217.22px;">$<span style="letter-spacing:-0.75px">1</span>0.00</div><div class="t" style="position:absolute;top:561.04px;font-size:17.5px;line-height:17.5px;color:#1a1a1a;font-weight:400;white-space:pre;letter-spacing:0.050px;left:437.00px;">USD Account (U...</div><div class="t" style="position:absolute;top:561.04px;font-size:17.5px;line-height:17.5px;color:#1a1a1a;font-weight:400;white-space:pre;letter-spacing:1.050px;left:597.40px;">09/30/2025</div><div class="t" style="position:absolute;top:561.75px;font-size:17.5px;line-height:17.5px;color:#2b2300;font-weight:400;white-space:pre;letter-spacing:0.188px;left:984.00px;">This needs a category</div><div class="t" style="position:absolute;top:561.04px;font-size:17.5px;line-height:17.5px;color:#1a1a1a;font-weight:400;white-space:pre;letter-spacing:0.300px;left:1310.00px;">Bills</div><div class="t" style="position:absolute;top:561.04px;font-size:17.5px;line-height:17.5px;color:#1a1a1a;font-weight:400;white-space:pre;letter-spacing:1.050px;right:58.22px;">$50.00</div><div class="t" style="position:absolute;top:606.81px;font-size:17.5px;line-height:17.5px;color:#1a1a1a;font-weight:400;white-space:pre;letter-spacing:0.050px;left:437.00px;">USD Account (U...</div><div class="t" style="position:absolute;top:606.81px;font-size:17.5px;line-height:17.5px;color:#1a1a1a;font-weight:400;white-space:pre;letter-spacing:1.050px;left:597.40px;">09/29/2025</div><div class="t" style="position:absolute;top:607.51px;font-size:17.5px;line-height:17.5px;color:#2b2300;font-weight:400;white-space:pre;letter-spacing:0.188px;left:984.00px;">This needs a category</div><div class="t" style="position:absolute;top:606.81px;font-size:17.5px;line-height:17.5px;color:#1a1a1a;font-weight:400;white-space:pre;letter-spacing:0.300px;left:1311.00px;">Coffee</div><div class="t" style="position:absolute;top:606.81px;font-size:17.5px;line-height:17.5px;color:#1a1a1a;font-weight:400;white-space:pre;letter-spacing:1.050px;right:58.22px;">$<span style="letter-spacing:-0.75px">1</span>00.00</div><div class="t" style="position:absolute;top:652.59px;font-size:17.5px;line-height:17.5px;color:#1a1a1a;font-weight:400;white-space:pre;letter-spacing:0.050px;left:437.00px;">USD Account (U...</div><div class="t" style="position:absolute;top:652.59px;font-size:17.5px;line-height:17.5px;color:#1a1a1a;font-weight:400;white-space:pre;letter-spacing:1.050px;left:597.40px;">09/28/2025</div><div class="t" style="position:absolute;top:653.29px;font-size:17.5px;line-height:17.5px;color:#2b2300;font-weight:400;white-space:pre;letter-spacing:0.188px;left:984.00px;">This needs a category</div><div class="t" style="position:absolute;top:652.59px;font-size:17.5px;line-height:17.5px;color:#1a1a1a;font-weight:400;white-space:pre;letter-spacing:0.300px;left:1310.00px;">Dinner</div><div class="t" style="position:absolute;top:652.59px;font-size:17.5px;line-height:17.5px;color:#1a1a1a;font-weight:400;white-space:pre;letter-spacing:1.050px;right:58.22px;">$50.00</div><div class="t" style="position:absolute;top:698.35px;font-size:17.5px;line-height:17.5px;color:#1a1a1a;font-weight:400;white-space:pre;letter-spacing:0.050px;left:437.00px;">USD Account (U...</div><div class="t" style="position:absolute;top:698.35px;font-size:17.5px;line-height:17.5px;color:#1a1a1a;font-weight:400;white-space:pre;letter-spacing:1.050px;left:597.40px;">09/27/2025</div><div class="t" style="position:absolute;top:698.35px;font-size:17.5px;line-height:17.5px;color:#1a1a1a;font-weight:400;white-space:pre;letter-spacing:0.300px;left:719.00px;">Airbnb</div><div class="t" style="position:absolute;top:699.05px;font-size:17.5px;line-height:17.5px;color:#2b2300;font-weight:400;white-space:pre;letter-spacing:0.188px;left:984.00px;">This needs a category</div><div class="t" style="position:absolute;top:698.35px;font-size:17.5px;line-height:17.5px;color:#1a1a1a;font-weight:400;white-space:pre;letter-spacing:0.300px;left:1311.00px;">Streaming</div><div class="t" style="position:absolute;top:698.35px;font-size:17.5px;line-height:17.5px;color:#1a1a1a;font-weight:400;white-space:pre;letter-spacing:1.050px;right:216.22px;">$278.26</div><div class="t" style="position:absolute;top:744.12px;font-size:17.5px;line-height:17.5px;color:#1a1a1a;font-weight:400;white-space:pre;letter-spacing:0.050px;left:437.00px;">USD Account (U...</div><div class="t" style="position:absolute;top:744.12px;font-size:17.5px;line-height:17.5px;color:#1a1a1a;font-weight:400;white-space:pre;letter-spacing:1.050px;left:597.40px;">09/26/2025</div><div class="t" style="position:absolute;top:744.12px;font-size:17.5px;line-height:17.5px;color:#1a1a1a;font-weight:400;white-space:pre;letter-spacing:0.300px;left:719.00px;">Chipotle</div><div class="t" style="position:absolute;top:744.83px;font-size:17.5px;line-height:17.5px;color:#2b2300;font-weight:400;white-space:pre;letter-spacing:0.188px;left:984.00px;">This needs a category</div><div class="t" style="position:absolute;top:744.12px;font-size:17.5px;line-height:17.5px;color:#1a1a1a;font-weight:400;white-space:pre;letter-spacing:0.300px;left:1310.00px;">Bills</div><div class="t" style="position:absolute;top:744.12px;font-size:17.5px;line-height:17.5px;color:#1a1a1a;font-weight:400;white-space:pre;letter-spacing:1.050px;right:216.22px;">$<span style="letter-spacing:-0.75px">1</span>83.76</div><div class="t" style="position:absolute;top:789.89px;font-size:17.5px;line-height:17.5px;color:#1a1a1a;font-weight:400;white-space:pre;letter-spacing:0.050px;left:437.00px;">USD Account (U...</div><div class="t" style="position:absolute;top:789.89px;font-size:17.5px;line-height:17.5px;color:#1a1a1a;font-weight:400;white-space:pre;letter-spacing:1.050px;left:597.40px;">09/25/2025</div><div class="t" style="position:absolute;top:789.89px;font-size:17.5px;line-height:17.5px;color:#1a1a1a;font-weight:400;white-space:pre;letter-spacing:0.300px;left:719.00px;">Costco</div><div class="t" style="position:absolute;top:790.59px;font-size:17.5px;line-height:17.5px;color:#2b2300;font-weight:400;white-space:pre;letter-spacing:0.188px;left:984.00px;">This needs a category</div><div class="t" style="position:absolute;top:789.89px;font-size:17.5px;line-height:17.5px;color:#1a1a1a;font-weight:400;white-space:pre;letter-spacing:0.300px;left:1310.00px;">Dinner</div><div class="t" style="position:absolute;top:789.89px;font-size:17.5px;line-height:17.5px;color:#1a1a1a;font-weight:400;white-space:pre;letter-spacing:1.050px;right:58.22px;">$<span style="letter-spacing:-0.75px">1</span>00.00</div><div class="t" style="position:absolute;top:835.66px;font-size:17.5px;line-height:17.5px;color:#1a1a1a;font-weight:400;white-space:pre;letter-spacing:0.050px;left:437.00px;">USD Account (U...</div><div class="t" style="position:absolute;top:835.66px;font-size:17.5px;line-height:17.5px;color:#1a1a1a;font-weight:400;white-space:pre;letter-spacing:1.050px;left:597.40px;">09/24/2025</div><div class="t" style="position:absolute;top:835.66px;font-size:17.5px;line-height:17.5px;color:#1a1a1a;font-weight:400;white-space:pre;letter-spacing:0.300px;left:719.00px;">Walgreens</div><div class="t" style="position:absolute;top:836.37px;font-size:17.5px;line-height:17.5px;color:#2b2300;font-weight:400;white-space:pre;letter-spacing:0.188px;left:984.00px;">This needs a category</div><div class="t" style="position:absolute;top:835.66px;font-size:17.5px;line-height:17.5px;color:#1a1a1a;font-weight:400;white-space:pre;letter-spacing:0.300px;left:1310.00px;">Dinner</div><div class="t" style="position:absolute;top:835.66px;font-size:17.5px;line-height:17.5px;color:#1a1a1a;font-weight:400;white-space:pre;letter-spacing:1.050px;right:58.22px;">$50.00</div><div class="t" style="position:absolute;top:881.43px;font-size:17.5px;line-height:17.5px;color:#1a1a1a;font-weight:400;white-space:pre;letter-spacing:0.050px;left:437.00px;">USD Account (U...</div><div class="t" style="position:absolute;top:881.43px;font-size:17.5px;line-height:17.5px;color:#1a1a1a;font-weight:400;white-space:pre;letter-spacing:1.050px;left:597.40px;">09/23/2025</div><div class="t" style="position:absolute;top:881.43px;font-size:17.5px;line-height:17.5px;color:#1a1a1a;font-weight:400;white-space:pre;letter-spacing:0.300px;left:719.00px;">Walgreens</div><div class="t" style="position:absolute;top:882.13px;font-size:17.5px;line-height:17.5px;color:#2b2300;font-weight:400;white-space:pre;letter-spacing:0.188px;left:984.00px;">This needs a category</div><div class="t" style="position:absolute;top:881.43px;font-size:17.5px;line-height:17.5px;color:#1a1a1a;font-weight:400;white-space:pre;letter-spacing:0.300px;left:1311.00px;">Coffee</div><div class="t" style="position:absolute;top:881.43px;font-size:17.5px;line-height:17.5px;color:#1a1a1a;font-weight:400;white-space:pre;letter-spacing:1.050px;right:216.22px;">$63.66</div><div class="t" style="position:absolute;top:927.21px;font-size:17.5px;line-height:17.5px;color:#1a1a1a;font-weight:400;white-space:pre;letter-spacing:0.050px;left:437.00px;">USD Account (U...</div><div class="t" style="position:absolute;top:927.21px;font-size:17.5px;line-height:17.5px;color:#1a1a1a;font-weight:400;white-space:pre;letter-spacing:1.050px;left:597.40px;">09/22/2025</div><div class="t" style="position:absolute;top:927.21px;font-size:17.5px;line-height:17.5px;color:#1a1a1a;font-weight:400;white-space:pre;letter-spacing:0.300px;left:719.00px;">Google</div><div class="t" style="position:absolute;top:927.91px;font-size:17.5px;line-height:17.5px;color:#2b2300;font-weight:400;white-space:pre;letter-spacing:0.188px;left:984.00px;">This needs a category</div><div class="t" style="position:absolute;top:927.21px;font-size:17.5px;line-height:17.5px;color:#1a1a1a;font-weight:400;white-space:pre;letter-spacing:0.300px;left:1311.00px;">Streaming</div><div class="t" style="position:absolute;top:927.21px;font-size:17.5px;line-height:17.5px;color:#1a1a1a;font-weight:400;white-space:pre;letter-spacing:1.050px;right:216.22px;">$9.<span style="letter-spacing:-0.75px">1</span>5</div><div class="t" style="position:absolute;top:972.97px;font-size:17.5px;line-height:17.5px;color:#1a1a1a;font-weight:400;white-space:pre;letter-spacing:0.050px;left:437.00px;">USD Account (U...</div><div class="t" style="position:absolute;top:972.97px;font-size:17.5px;line-height:17.5px;color:#1a1a1a;font-weight:400;white-space:pre;letter-spacing:1.050px;left:597.40px;">09/2<span style="letter-spacing:-0.75px">1</span>/2025</div><div class="t" style="position:absolute;top:972.97px;font-size:17.5px;line-height:17.5px;color:#1a1a1a;font-weight:400;white-space:pre;letter-spacing:0.300px;left:719.00px;">Spotify</div><div class="t" style="position:absolute;top:973.67px;font-size:17.5px;line-height:17.5px;color:#2b2300;font-weight:400;white-space:pre;letter-spacing:0.188px;left:984.00px;">This needs a category</div><div class="t" style="position:absolute;top:972.97px;font-size:17.5px;line-height:17.5px;color:#1a1a1a;font-weight:400;white-space:pre;letter-spacing:0.300px;left:1311.00px;">Gift</div><div class="t" style="position:absolute;top:972.97px;font-size:17.5px;line-height:17.5px;color:#1a1a1a;font-weight:400;white-space:pre;letter-spacing:1.050px;right:216.22px;">$9<span style="letter-spacing:-0.75px">1</span>.58</div><div class="t" style="position:absolute;top:1018.75px;font-size:17.5px;line-height:17.5px;color:#1a1a1a;font-weight:400;white-space:pre;letter-spacing:0.050px;left:437.00px;">USD Account (U...</div><div class="t" style="position:absolute;top:1018.75px;font-size:17.5px;line-height:17.5px;color:#1a1a1a;font-weight:400;white-space:pre;letter-spacing:1.050px;left:597.40px;">09/20/2025</div><div class="t" style="position:absolute;top:1018.75px;font-size:17.5px;line-height:17.5px;color:#1a1a1a;font-weight:400;white-space:pre;letter-spacing:0.300px;left:719.00px;">Venmo</div><div class="t" style="position:absolute;top:1019.45px;font-size:17.5px;line-height:17.5px;color:#2b2300;font-weight:400;white-space:pre;letter-spacing:0.188px;left:984.00px;">This needs a category</div><div class="t" style="position:absolute;top:1018.75px;font-size:17.5px;line-height:17.5px;color:#1a1a1a;font-weight:400;white-space:pre;letter-spacing:0.300px;left:1311.00px;">Coffee</div><div class="t" style="position:absolute;top:1018.75px;font-size:17.5px;line-height:17.5px;color:#1a1a1a;font-weight:400;white-space:pre;letter-spacing:1.050px;right:216.22px;">$<span style="letter-spacing:-0.75px">1</span>2<span style="letter-spacing:-0.75px">1</span>.49</div><div class="t" style="position:absolute;top:1064.52px;font-size:17.5px;line-height:17.5px;color:#1a1a1a;font-weight:400;white-space:pre;letter-spacing:0.050px;left:437.00px;">USD Account (U...</div><div class="t" style="position:absolute;top:1064.52px;font-size:17.5px;line-height:17.5px;color:#1a1a1a;font-weight:400;white-space:pre;letter-spacing:1.050px;left:597.40px;">09/<span style="letter-spacing:-0.75px">1</span>9/2025</div><div class="t" style="position:absolute;top:1064.52px;font-size:17.5px;line-height:17.5px;color:#1a1a1a;font-weight:400;white-space:pre;letter-spacing:0.300px;left:719.00px;">Chipotle</div><div class="t" style="position:absolute;top:1065.22px;font-size:17.5px;line-height:17.5px;color:#2b2300;font-weight:400;white-space:pre;letter-spacing:0.188px;left:984.00px;">This needs a category</div><div class="t" style="position:absolute;top:1064.52px;font-size:17.5px;line-height:17.5px;color:#1a1a1a;font-weight:400;white-space:pre;letter-spacing:0.300px;left:1311.00px;">Streaming</div><div class="t" style="position:absolute;top:1064.52px;font-size:17.5px;line-height:17.5px;color:#1a1a1a;font-weight:400;white-space:pre;letter-spacing:1.050px;right:58.22px;">$<span style="letter-spacing:-0.75px">1</span>50.00</div><div class="t" style="position:absolute;top:1110.28px;font-size:17.5px;line-height:17.5px;color:#1a1a1a;font-weight:400;white-space:pre;letter-spacing:0.050px;left:437.00px;">USD Account (U...</div><div class="t" style="position:absolute;top:1110.28px;font-size:17.5px;line-height:17.5px;color:#1a1a1a;font-weight:400;white-space:pre;letter-spacing:1.050px;left:597.40px;">09/<span style="letter-spacing:-0.75px">1</span>8/2025</div><div class="t" style="position:absolute;top:1110.28px;font-size:17.5px;line-height:17.5px;color:#1a1a1a;font-weight:400;white-space:pre;letter-spacing:0.300px;left:719.00px;">Chipotle</div><div class="t" style="position:absolute;top:1110.98px;font-size:17.5px;line-height:17.5px;color:#2b2300;font-weight:400;white-space:pre;letter-spacing:0.188px;left:984.00px;">This needs a category</div><div class="t" style="position:absolute;top:1110.28px;font-size:17.5px;line-height:17.5px;color:#1a1a1a;font-weight:400;white-space:pre;letter-spacing:0.300px;left:1311.00px;">Groceries</div><div class="t" style="position:absolute;top:1110.28px;font-size:17.5px;line-height:17.5px;color:#1a1a1a;font-weight:400;white-space:pre;letter-spacing:1.050px;right:216.22px;">$9.6<span style="letter-spacing:-0.75px">1</span></div><div class="t" style="position:absolute;top:1156.06px;font-size:17.5px;line-height:17.5px;color:#1a1a1a;font-weight:400;white-space:pre;letter-spacing:0.050px;left:437.00px;">USD Account (U...</div><div class="t" style="position:absolute;top:1156.06px;font-size:17.5px;line-height:17.5px;color:#1a1a1a;font-weight:400;white-space:pre;letter-spacing:1.050px;left:597.40px;">09/<span style="letter-spacing:-0.75px">1</span>7/2025</div><div class="t" style="position:absolute;top:1156.06px;font-size:17.5px;line-height:17.5px;color:#1a1a1a;font-weight:400;white-space:pre;letter-spacing:0.300px;left:719.00px;">Amazon</div><div class="t" style="position:absolute;top:1156.76px;font-size:17.5px;line-height:17.5px;color:#2b2300;font-weight:400;white-space:pre;letter-spacing:0.188px;left:984.00px;">This needs a category</div><div class="t" style="position:absolute;top:1156.06px;font-size:17.5px;line-height:17.5px;color:#1a1a1a;font-weight:400;white-space:pre;letter-spacing:0.300px;left:1311.00px;">Subscription</div><div class="t" style="position:absolute;top:1156.06px;font-size:17.5px;line-height:17.5px;color:#1a1a1a;font-weight:400;white-space:pre;letter-spacing:1.050px;right:58.22px;">$<span style="letter-spacing:-0.75px">1</span>00.00</div><div class="t" style="position:absolute;top:1201.83px;font-size:17.5px;line-height:17.5px;color:#1a1a1a;font-weight:400;white-space:pre;letter-spacing:0.050px;left:437.00px;">USD Account (U...</div><div class="t" style="position:absolute;top:1201.83px;font-size:17.5px;line-height:17.5px;color:#1a1a1a;font-weight:400;white-space:pre;letter-spacing:1.050px;left:597.40px;">09/<span style="letter-spacing:-0.75px">1</span>6/2025</div><div class="t" style="position:absolute;top:1201.83px;font-size:17.5px;line-height:17.5px;color:#1a1a1a;font-weight:400;white-space:pre;letter-spacing:0.300px;left:719.00px;">Amazon</div><div class="t" style="position:absolute;top:1202.53px;font-size:17.5px;line-height:17.5px;color:#2b2300;font-weight:400;white-space:pre;letter-spacing:0.188px;left:984.00px;">This needs a category</div><div class="t" style="position:absolute;top:1201.83px;font-size:17.5px;line-height:17.5px;color:#1a1a1a;font-weight:400;white-space:pre;letter-spacing:0.300px;left:1311.00px;">Subscription</div><div class="t" style="position:absolute;top:1201.83px;font-size:17.5px;line-height:17.5px;color:#1a1a1a;font-weight:400;white-space:pre;letter-spacing:1.050px;right:58.22px;">$<span style="letter-spacing:-0.75px">1</span>00.00</div>
<div style="position:absolute;left:1812px;top:1098.3px;width:51px;height:51px;border-radius:50%;background:#6e6d6a;"></div><svg style="position:absolute;left:0;top:0" width="1920" height="1200" viewBox="0 0 1920 1200"><path d="M1831.3 1115.6 Q1831.3 1110.2 1837 1110.2 Q1842.8 1110.2 1842.8 1115.3 Q1842.8 1118.6 1839.6 1120.3 Q1837.2 1121.6 1837.2 1124 L1837.2 1127.5" fill="none" stroke="#fff" stroke-width="4.2" stroke-linecap="round"/><circle cx="1837.1" cy="1135.3" r="2.6" fill="#fff"/></svg>
<div style="position:absolute;left:655.2px;top:505.5px;width:609.8px;height:189.2px;background:#fff;border-radius:9px;box-shadow:0 6px 40px rgba(0,0,0,0.18);"></div><div style="position:absolute;left:655.2px;top:564.8px;width:609.8px;height:1.2px;background:#e3e3e3;"></div><svg style="position:absolute;left:1226px;top:527px" width="17" height="17" viewBox="0 0 17 17"><path d="M1 1 L16 16 M16 1 L1 16" stroke="#4f55d8" stroke-width="1.7"/></svg><div style="position:absolute;left:1175.3px;top:633.8px;width:68.9px;height:40px;background:#5559f2;border-radius:10px;"></div>
<div class="t" style="position:absolute;top:524.66px;font-size:22.4px;line-height:22.4px;color:#1a1a1a;font-weight:400;white-space:pre;letter-spacing:0.739px;left:674.70px;-webkit-text-stroke:0.6px #1a1a1a;">Import Successful</div><div class="t" style="position:absolute;top:592.65px;font-size:17px;line-height:17px;color:#1a1a1a;font-weight:400;white-space:pre;letter-spacing:0.482px;left:676.70px;">30 transactions have been successfully imported.</div><div class="t" style="position:absolute;top:644.75px;font-size:19px;line-height:19px;color:#ffffff;font-weight:400;white-space:pre;letter-spacing:-0.079px;left:1196.00px;">OK</div>
</body></html>
